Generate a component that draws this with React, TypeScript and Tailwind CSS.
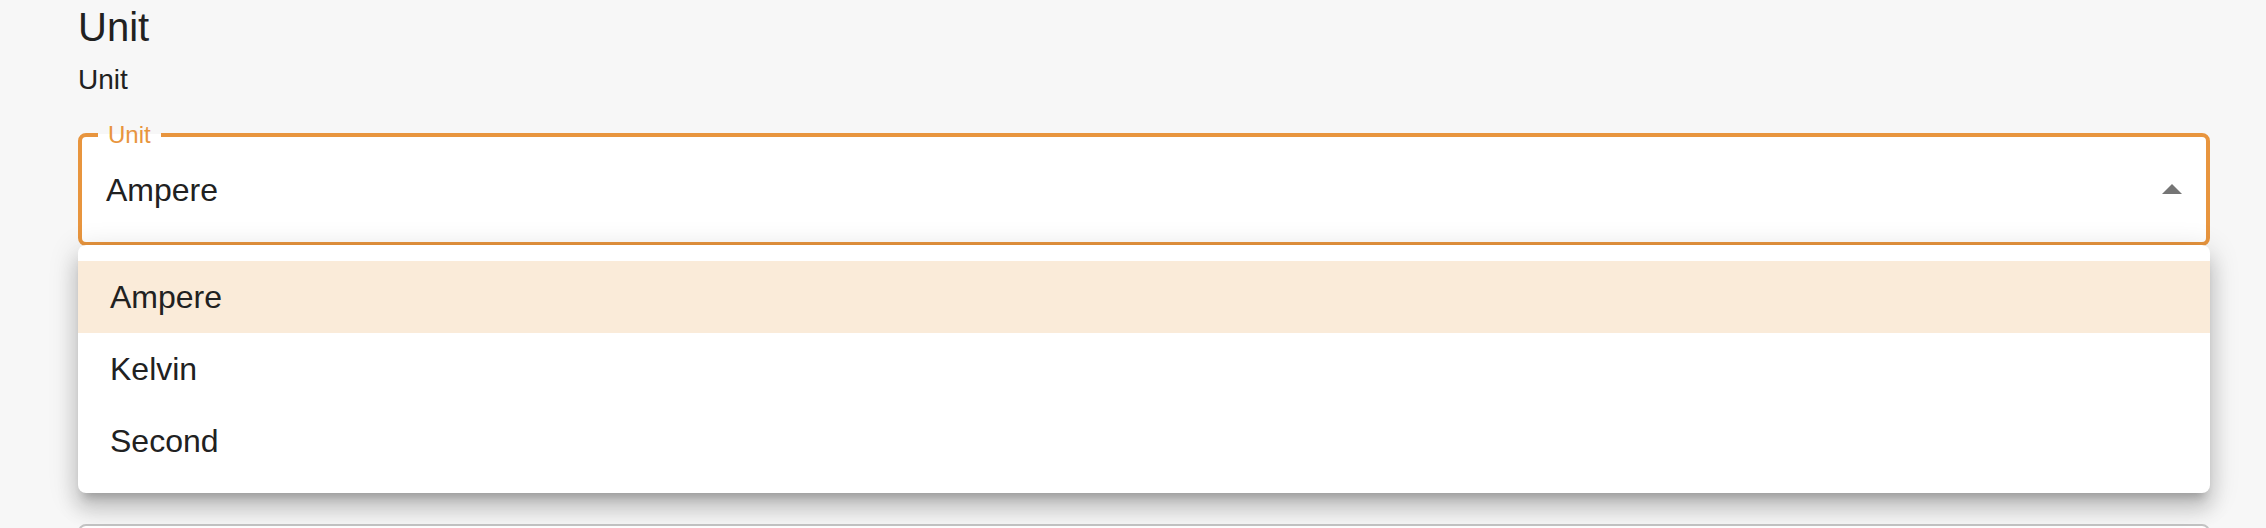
import React from 'react';

const units = ['Ampere', 'Kelvin', 'Second'];

const ArrowUp = () => (
  <svg className="w-12 h-12 shrink-0" viewBox="0 0 24 24" fill="#757575">
    <path d="M7 14l5-5 5 5z" />
  </svg>
);

const UnitSelect = ({ value }: { value: string }) => {
  return (
    <div className="relative h-[112px] bg-white rounded-lg flex items-center justify-between pl-[28px] pr-[14px]">
      {/* outline with notch for the label */}
      <fieldset className="absolute inset-x-0 bottom-0 top-[-10px] rounded-lg border-4 border-[#E8953E] px-4 pointer-events-none">
        <legend className="invisible h-[22px] text-[24px] leading-[22px]">
          <span className="px-[10px]">Unit</span>
        </legend>
      </fieldset>
      <label className="absolute left-[30px] top-[-11px] text-[24px] leading-[24px] text-[#E8953E]">Unit</label>

      <span className="text-[32px] leading-[46px] text-[#212121]">{value}</span>
      <ArrowUp />

      {/* open menu */}
      <ul className="absolute left-0 right-0 top-[111px] z-10 bg-white rounded-lg py-4 shadow-[0_10px_10px_-6px_rgba(0,0,0,0.2),0_16px_20px_2px_rgba(0,0,0,0.14),0_6px_28px_4px_rgba(0,0,0,0.12)]">
        {units.map((u) => (
          <li
            key={u}
            className={`h-[72px] flex items-center px-8 text-[32px] leading-[48px] text-[#212121] ${u === value ? 'bg-[#FAEBD9]' : ''}`}
          >
            {u}
          </li>
        ))}
      </ul>
    </div>
  );
};

export default function App() {
  return (
    <div className="h-[528px] overflow-hidden bg-[#F7F7F7] pl-[78px] pr-[56px] pt-[3px] font-['Liberation_Sans',Arial,sans-serif] text-[#212121]">
      <h1 className="text-[40px] leading-[48px] font-normal">Unit</h1>
      <p className="mt-[9px] text-[28px] leading-[40px]">Unit</p>

      <div className="mt-[34px]">
        <UnitSelect value="Ampere" />
      </div>

      {/* next field, mostly hidden behind the open menu */}
      <div className="mt-[278px] h-[112px] bg-white rounded-lg border-2 border-[#C4C4C4]" />
    </div>
  );
}
